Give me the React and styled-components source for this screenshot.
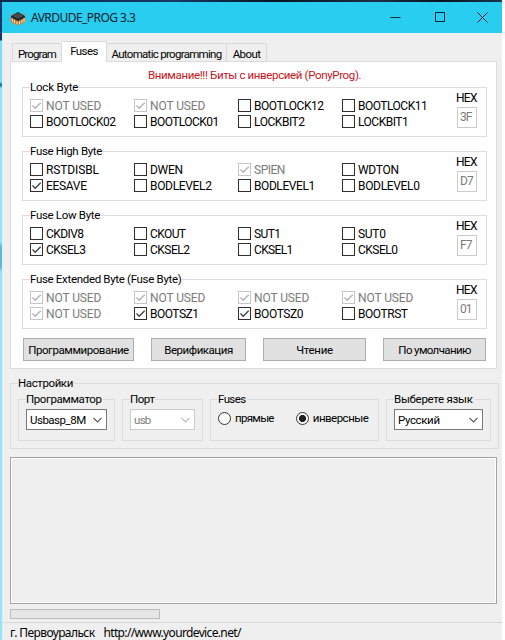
import React from "react";
import styled, { createGlobalStyle, css } from "styled-components";

const Global = createGlobalStyle`
  * { box-sizing: border-box; }
  body { margin: 0; background: #fff; }
`;

const Desktop = styled.div`
  width: 505px;
  height: 640px;
  overflow: hidden;
  display: grid;
  grid-template-columns: 2px 500px 3px;
  grid-template-rows: 2px 638px;
  background: #fff;
`;
const Backdrop = styled.div`
  grid-column: 1 / 3;
  background: linear-gradient(90deg, #0b2a4c, #163a63 35%, #0a1424 55%, #1d2f48 75%, #0a1220 88%, #1b3552);
`;
const EdgeStrip = styled.div`
  background: linear-gradient(180deg, #0d3a66 0 38px, #7fdcf2 39px 80px, #1d7fa0 82px 84px, #8ee6f8 86px 240px, #5fb9d2 245px 265px, #93e6f8 270px);
`;
const Window = styled.div`
  display: flex;
  flex-direction: column;
  background: #efefef;
  font: 12px/14px Roboto, "Liberation Sans", sans-serif;
  color: #000;
  white-space: nowrap;
`;

/* Text runs: $s is the letter spacing in px */
const Text = styled.span`
  letter-spacing: ${(p) => p.$s || 0}px;
  font-size: ${(p) => (p.$caps ? 12 : 11.5)}px;
`;

const TitleBar = styled.header`
  height: 31px;
  flex: none;
  display: flex;
  align-items: center;
  background: #29cdf0;
  padding-left: 8px;
`;
const TitleText = styled.h1`
  margin: 0 auto 0 5px;
  font: 400 12px/16px "Noto Sans", "Open Sans", sans-serif;
  letter-spacing: -0.54px;
  color: #06222b;
`;
const CaptionButton = styled.span`
  width: ${(p) => p.$w || 46}px;
  display: flex;
  justify-content: center;
`;

const Content = styled.main`
  flex: 1;
  display: flex;
  flex-direction: column;
  border-left: 1px solid #e2eef0;
  padding-top: 8px;
`;
const Tabs = styled.nav`
  display: flex;
  align-items: flex-end;
  height: 20px;
  margin-left: 9px;
`;
const Tab = styled.div`
  width: ${(p) => p.$w}px;
  height: 18px;
  display: flex;
  justify-content: center;
  align-items: center;
  padding-top: 2px;
  border: 1px solid #d9d9d9;
  border-width: 1px 1px 0 0;
  ${(p) => p.$first && css`border-left-width: 1px;`}
  ${(p) => p.$active && css`
    height: 21px;
    padding: 0 0 2px;
    margin-bottom: -1px;
    background: #fff;
    position: relative;
  `}
`;
const Page = styled.section`
  width: 487px;
  height: 308px;
  margin-left: 7px;
  padding: 6px 0 0 11px;
  border: 1px solid #dcdcdc;
  background: #fff;
`;
const Warning = styled.div`
  height: 14px;
  margin-left: 126px;
  color: #c8141c;
  letter-spacing: -0.36px;
  font-size: 11.5px;
`;
const Fuses = styled.div`
  display: grid;
  gap: 14px;
  margin-top: 5px;
`;
const Group = styled.fieldset`
  position: relative;
  display: flex;
  min-width: 0;
  margin: 0;
  padding: 0;
  width: ${(p) => p.$w}px;
  height: ${(p) => p.$h}px;
  border: 1px solid #dcdcdc;
  background: inherit;
`;
const Legend = styled.div`
  position: absolute;
  left: 7px;
  top: -8px;
  height: 14px;
  padding-right: 1px;
  background: ${(p) => (p.$gray ? "#efefef" : "#fff")};
`;
const Bits = styled.div`
  display: grid;
  grid-template-columns: repeat(4, 104px);
  grid-auto-rows: 16px;
  padding: 10px 0 0 7px;
`;
const Bit = styled.label`
  display: flex;
  align-items: center;
  gap: 3px;
  padding-bottom: 1px;
  color: ${(p) => (p.$off ? "#7b7b7b" : "#000")};
`;
const Box = styled.span`
  width: 13px;
  height: 13px;
  flex: none;
  display: flex;
  border: 1px solid ${(p) => (p.$off ? "#c6c6c6" : "#2f2f2f")};
  color: ${(p) => (p.$off ? "#b4b4b4" : "#444")};
  background: #fff;
`;
const Hex = styled.div`
  display: flex;
  flex-direction: column;
  padding: 3px 0 0 10px;
  gap: 2px;
`;
const HexValue = styled.div`
  width: 20px;
  height: 21px;
  margin-left: 1px;
  padding: 2px 0 0 2px;
  border: 1px solid #cbcbcb;
  color: #7b7b7b;
`;
const Buttons = styled.div`
  display: flex;
  margin: 9px 0 0 1px;
`;
const Button = styled.button`
  width: ${(p) => p.$w}px;
  height: 23px;
  margin-right: ${(p) => p.$gap}px;
  padding: 1px 0 0;
  border: 1px solid #adadad;
  background: #e1e1e1;
  font: inherit;
  line-height: 14px;
  color: #000;
`;

const Settings = styled.div`
  margin: 14px 0 0 7px;
`;
const SettingsRow = styled.div`
  display: grid;
  grid-template-columns: 104px 88px 176px 105px;
  align-items: start;
  padding: 15px 0 0 7px;
`;
const Combo = styled.div`
  width: ${(p) => p.$w}px;
  height: 21px;
  margin: 9px 0 0 7px;
  padding: 0 4px 0 3px;
  display: flex;
  align-items: center;
  justify-content: space-between;
  border: 1px solid ${(p) => (p.$off ? "#cccccc" : "#7a7a7a")};
  background: #fff;
  color: ${(p) => (p.$off ? "#7b7b7b" : "#000")};
  svg { color: ${(p) => (p.$off ? "#b8b8b8" : "#555")}; }
`;
const Radios = styled.div`
  display: flex;
  gap: 22px;
  height: 36px;
  align-items: center;
  padding-left: 7px;
`;
const Radio = styled.label`
  display: flex;
  align-items: center;
  gap: 4px;
`;
const Dot = styled.span`
  width: 13px;
  height: 13px;
  border-radius: 50%;
  border: 1px solid #333;
  background: ${(p) => (p.$on ? "radial-gradient(circle, #222 0 3.2px, #fff 3.9px)" : "#fff")};
`;
const Log = styled.div`
  width: 487px;
  height: 147px;
  margin: 8px 0 0 7px;
  border: 1px solid #a4a4a4;
  box-shadow: inset 0 0 0 1px #fff;
`;
const Progress = styled.div`
  width: 150px;
  height: 10px;
  margin: 5px 0 3px 7px;
  border: 1px solid #bcbcbc;
  background: #e6e6e6;
`;
const Status = styled.footer`
  flex: 1;
  display: flex;
  gap: 9px;
  padding: 2px 0 0 7px;
  border-top: 1px solid #d7d7d7;
  font: 12px/16px "Noto Sans", "Open Sans", sans-serif;
`;
const StatusItem = styled.span`
  letter-spacing: ${(p) => p.$s}px;
`;

const ChipIcon = () => (
  <svg width="16" height="16" viewBox="0 0 16 16">
    <path d="M1 5l2-1.500M15 5l-2-1.500M1 7.500v3.500l3 2.500 4 1 4-1 3-2.500V7.500" fill="#b87a3c" stroke="#c98d4c" strokeWidth="1.200" />
    <g stroke="#f8e8c0" strokeWidth="1">
      <path d="M2.500 8.500v3M4.500 10v3M7 11.500v2.500M9.500 11.500v2.500M12 10v3M14 8v3.500" />
    </g>
    <path d="M1 6L8 2l7 4v1.500L8 11 1 7.500z" fill="#26282b" />
    <path d="M2.500 6L8 3l5.500 3L8 8.500z" fill="#4a4c50" />
  </svg>
);
const Check = () => (
  <svg width="11" height="11" viewBox="0 0 11 11">
    <path d="M1.500 5.500L4.200 8.200 9.700 2.700" fill="none" stroke="currentColor" strokeWidth="1.400" />
  </svg>
);
const Chevron = () => (
  <svg width="9" height="6" viewBox="0 0 9 6">
    <path d="M.5 .8l4 4 4-4" fill="none" stroke="currentColor" strokeWidth="1.200" />
  </svg>
);

const NU = ["NOT USED", -0.1, "off on"];
const GROUPS = [
  { title: "Lock Byte", s: -0.2, hex: "3F", bits: [NU, NU, ["BOOTLOCK12", -0.46], ["BOOTLOCK11", -0.5], ["BOOTLOCK02", -0.46], ["BOOTLOCK01", -0.55], ["LOCKBIT2", -0.45], ["LOCKBIT1", -0.5]] },
  { title: "Fuse High Byte", s: -0.32, hex: "D7", bits: [["RSTDISBL", -0.13], ["DWEN", -0.3], ["SPIEN", -0.5, "off on"], ["WDTON", -0.29], ["EESAVE", -0.31, "on"], ["BODLEVEL2", -0.32], ["BODLEVEL1", -0.42], ["BODLEVEL0", -0.32]] },
  { title: "Fuse Low Byte", s: -0.32, hex: "F7", bits: [["CKDIV8", -0.57], ["CKOUT", -0.59], ["SUT1", -0.6], ["SUT0", -0.3], ["CKSEL3", -0.5, "on"], ["CKSEL2", -0.5], ["CKSEL1", -0.65], ["CKSEL0", -0.5]] },
  { title: "Fuse Extended Byte (Fuse Byte)", s: -0.32, hex: "01", bits: [NU, NU, NU, NU, NU, ["BOOTSZ1", -0.49, "on"], ["BOOTSZ0", -0.4, "on"], ["BOOTRST", -0.44]] },
];

function FuseGroup({ title, s, hex, bits }) {
  return (
    <Group $w={465} $h={50}>
      <Legend><Text $s={s}>{title}</Text></Legend>
      <Bits>
        {bits.map(([name, ls, state = ""], i) => {
          const off = state.includes("off");
          return (
            <Bit key={i} $off={off}>
              <Box $off={off}>{state.includes("on") && <Check />}</Box>
              <Text $caps $s={ls}>{name}</Text>
            </Bit>
          );
        })}
      </Bits>
      <Hex>
        <Text $caps $s={-0.7}>HEX</Text>
        <HexValue><Text $caps $s={-0.9}>{hex}</Text></HexValue>
      </Hex>
    </Group>
  );
}

export default function App() {
  return (
    <Desktop>
      <Global />
      <Backdrop />
      <span />
      <EdgeStrip />
      <Window>
        <TitleBar>
          <ChipIcon />
          <TitleText>AVRDUDE_PROG 3.3</TitleText>
          <CaptionButton $w={45}>
            <svg width="11" height="11"><path d="M.5 5.500h10" stroke="#10222a" /></svg>
          </CaptionButton>
          <CaptionButton $w={45}>
            <svg width="11" height="11"><path d="M.5 .5h9v9h-9z" fill="none" stroke="#10222a" /></svg>
          </CaptionButton>
          <CaptionButton $w={39}>
            <svg width="11" height="11"><path d="M.5 .5l10 10M10.500 .5l-10 10" stroke="#10222a" /></svg>
          </CaptionButton>
        </TitleBar>
        <Content>
          <Tabs>
            <Tab $w={50} $first><Text $s={-0.86}>Program</Text></Tab>
            <Tab $w={45} $active><Text $s={-0.6}>Fuses</Text></Tab>
            <Tab $w={120}><Text $s={-0.7}>Automatic programming</Text></Tab>
            <Tab $w={40}><Text $s={-0.6}>About</Text></Tab>
          </Tabs>
          <Page>
            <Warning>Внимание!!! Биты с инверсией (PonyProg).</Warning>
            <Fuses>
              {GROUPS.map((g) => <FuseGroup key={g.title} {...g} />)}
            </Fuses>
            <Buttons>
              <Button $w={111} $gap={17}><Text $s={-0.45}>Программирование</Text></Button>
              <Button $w={95} $gap={17}><Text $s={-0.46}>Верификация</Text></Button>
              <Button $w={103} $gap={17}><Text $s={-0.3}>Чтение</Text></Button>
              <Button $w={103} $gap={0}><Text $s={-0.63}>По умолчанию</Text></Button>
            </Buttons>
          </Page>
          <Settings>
            <Group $w={489} $h={66}>
              <Legend $gray><Text $s={-0.4}>Настройки</Text></Legend>
              <SettingsRow>
                <Group $w={97} $h={42}>
                  <Legend $gray><Text $s={-0.4}>Программатор</Text></Legend>
                  <Combo $w={81}><Text $s={-0.5}>Usbasp_8M</Text><Chevron /></Combo>
                </Group>
                <Group $w={81} $h={42}>
                  <Legend $gray><Text $s={-0.45}>Порт</Text></Legend>
                  <Combo $w={65} $off><Text $s={-0.7}>usb</Text><Chevron /></Combo>
                </Group>
                <Group $w={169} $h={42}>
                  <Legend $gray><Text $s={-0.6}>Fuses</Text></Legend>
                  <Radios>
                    <Radio><Dot /><Text $s={-0.7}>прямые</Text></Radio>
                    <Radio><Dot $on /><Text $s={-0.51}>инверсные</Text></Radio>
                  </Radios>
                </Group>
                <Group $w={105} $h={42}>
                  <Legend $gray><Text $s={-0.29}>Выберете язык</Text></Legend>
                  <Combo $w={89}><Text $s={-0.37}>Русский</Text><Chevron /></Combo>
                </Group>
              </SettingsRow>
            </Group>
          </Settings>
          <Log />
          <Progress />
          <Status>
            <StatusItem $s={-0.59}>г. Первоуральск</StatusItem>
            <StatusItem $s={-0.64}>http://www.yourdevice.net/</StatusItem>
          </Status>
        </Content>
      </Window>
    </Desktop>
  );
}
